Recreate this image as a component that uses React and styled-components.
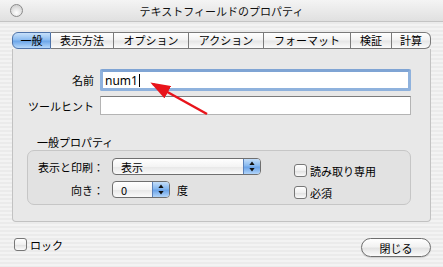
import styled, { createGlobalStyle } from "styled-components";

const GlobalStyle = createGlobalStyle`
  html, body {
    margin: 0;
    padding: 0;
  }
  body {
    font-family: "Noto Sans CJK JP", "Noto Sans", sans-serif;
    font-size: 11px;
    color: #000;
  }
`;

const tabs = [
  { label: "一般", width: 39 },
  { label: "表示方法", width: 63 },
  { label: "オプション", width: 75 },
  { label: "アクション", width: 75 },
  { label: "フォーマット", width: 87 },
  { label: "検証", width: 41 },
  { label: "計算", width: 39 },
];

// up/down arrows of a popup menu
const StepArrows = () => (
  <svg width="6" height="11" viewBox="0 0 6 11">
    <path d="M3,0.5 L5.6,4 L0.4,4 Z" fill="#111" />
    <path d="M3,10.5 L5.6,7 L0.4,7 Z" fill="#111" />
  </svg>
);

const App = () => {
  return (
    <Window>
      <GlobalStyle />
      <TitleBar>
        <CloseDot />
        <Title>テキストフィールドのプロパティ</Title>
        <Spacer />
      </TitleBar>

      <Main>
        <TabBar>
          {tabs.map((t, i) => (
            <Tab
              key={t.label}
              $width={t.width}
              $active={i === 0}
              $first={i === 0}
              $last={i === tabs.length - 1}
            >
              {t.label}
            </Tab>
          ))}
        </TabBar>

        <Panel>
          <FieldGrid>
            <FieldLabel>名前</FieldLabel>
            <TextBox $focused>
              num1
              <Caret />
            </TextBox>
            <FieldLabel>ツールヒント</FieldLabel>
            <TextBox />
          </FieldGrid>

          <GroupTitle>一般プロパティ</GroupTitle>
          <GroupBox>
            <PopupGrid>
              <PopupLabel>表示と印刷：</PopupLabel>
              <PopupRow>
                <Popup $width={149}>
                  <PopupText>表示</PopupText>
                  <Stepper>
                    <StepArrows />
                  </Stepper>
                </Popup>
              </PopupRow>
              <PopupLabel>向き：</PopupLabel>
              <PopupRow>
                <Popup $width={58}>
                  <PopupText>0</PopupText>
                  <Stepper>
                    <StepArrows />
                  </Stepper>
                </Popup>
                <Unit>度</Unit>
              </PopupRow>
            </PopupGrid>
            <CheckColumn>
              <CheckRow>
                <CheckBox />
                読み取り専用
              </CheckRow>
              <CheckRow>
                <CheckBox />
                必須
              </CheckRow>
            </CheckColumn>
          </GroupBox>
        </Panel>

        <Footer>
          <CheckRow>
            <CheckBox />
            ロック
          </CheckRow>
          <PillButton>閉じる</PillButton>
        </Footer>
      </Main>

      <Arrow width="443" height="267" viewBox="0 0 443 267">
        <defs>
          <marker
            id="head"
            markerWidth="20"
            markerHeight="14"
            refX="17"
            refY="7"
            orient="auto"
            markerUnits="userSpaceOnUse"
          >
            <path d="M0,0 L20,7 L0,14 Z" fill="#e8141b" />
          </marker>
        </defs>
        <line
          x1="207"
          y1="114"
          x2="153"
          y2="84"
          stroke="#e8141b"
          strokeWidth="2.5"
          markerEnd="url(#head)"
        />
      </Arrow>
    </Window>
  );
};

export default App;

const Window = styled.div`
  position: relative;
  width: 443px;
  height: 267px;
  overflow: hidden;
  display: flex;
  flex-direction: column;
  background: repeating-linear-gradient(
    to bottom,
    #f3f3f3 0px,
    #f3f3f3 2px,
    #ebebeb 2px,
    #ebebeb 4px
  );
`;

const TitleBar = styled.div`
  height: 22px;
  box-sizing: border-box;
  display: flex;
  align-items: center;
  padding: 0 10px;
  background: linear-gradient(to bottom, #f4f4f4, #e0e0e0);
  border-bottom: 1px solid #c4c4c4;
`;

const CloseDot = styled.div`
  width: 11px;
  height: 11px;
  border-radius: 50%;
  border: 1px solid #8a8a8a;
  background: radial-gradient(circle at 50% 70%, #ffffff, #d6d6d6 70%);
`;

const Title = styled.div`
  flex: 1;
  text-align: center;
  font-size: 11px;
  color: #111;
`;

const Spacer = styled.div`
  width: 13px;
`;

const Main = styled.div`
  flex: 1;
  display: flex;
  flex-direction: column;
  padding: 10px 12px 0 12px;
`;

const TabBar = styled.div`
  display: flex;
  height: 17px;
`;

const Tab = styled.div`
  width: ${(p) => p.$width}px;
  box-sizing: border-box;
  display: flex;
  align-items: center;
  justify-content: center;
  border: 1px solid #7a7a7a;
  border-left: ${(p) => (p.$first ? "1px solid #5a7fb0" : "none")};
  border-radius: ${(p) =>
    p.$first ? "6px 0 0 6px" : p.$last ? "0 6px 6px 0" : "0"};
  background: ${(p) =>
    p.$active
      ? "linear-gradient(to bottom, #c7e0fa 0%, #8cbcf0 45%, #6ea7e9 55%, #b6d8fb 100%)"
      : "linear-gradient(to bottom, #ffffff 0%, #f2f2f2 45%, #e6e6e6 55%, #fbfbfb 100%)"};
  border-color: ${(p) => (p.$active ? "#4d72a8" : "#7a7a7a")};
  font-size: 11px;
  line-height: 1;
`;

const Panel = styled.div`
  height: 173px;
  box-sizing: border-box;
  border: 1px solid #c2c2c2;
  border-top: none;
  border-radius: 0 0 4px 4px;
  background: #e8e8e8;
  padding: 20px 19px 0 0;
  display: flex;
  flex-direction: column;
`;

const FieldGrid = styled.div`
  display: grid;
  grid-template-columns: 81px 1fr;
  column-gap: 6px;
  row-gap: 5px;
  align-items: center;
`;

const FieldLabel = styled.div`
  text-align: right;
`;

const TextBox = styled.div`
  height: ${(p) => (p.$focused ? 22 : 19)}px;
  box-sizing: border-box;
  display: flex;
  align-items: center;
  padding-left: ${(p) => (p.$focused ? 2 : 3)}px;
  background: #fff;
  font-family: "Noto Sans", sans-serif;
  font-size: 12px;
  border: ${(p) => (p.$focused ? "3px solid #8fb2dd" : "1px solid #b4b4b4")};
  border-top-color: ${(p) => (p.$focused ? "#7fa4d4" : "#7c7c7c")};
  border-radius: ${(p) => (p.$focused ? "2px" : "0")};
`;

const Caret = styled.span`
  display: inline-block;
  width: 1px;
  height: 13px;
  margin-left: 1px;
  background: #000;
`;

const GroupTitle = styled.div`
  margin: 20px 0 0 24px;
  height: 15px;
  line-height: 15px;
`;

const GroupBox = styled.div`
  margin: 0 0 0 14px;
  height: 55px;
  box-sizing: border-box;
  border: 1px solid #c6c6c6;
  border-radius: 7px;
  background: #e2e2e2;
  display: flex;
  padding: 7px 0 0 0;
`;

const PopupGrid = styled.div`
  display: grid;
  grid-template-columns: 76px auto;
  column-gap: 8px;
  row-gap: 6px;
  align-items: center;
  align-content: start;
`;

const PopupLabel = styled.div`
  text-align: right;
`;

const PopupRow = styled.div`
  display: flex;
  align-items: center;
  gap: 7px;
`;

const Popup = styled.div`
  width: ${(p) => p.$width}px;
  height: 17px;
  box-sizing: border-box;
  display: flex;
  border: 1px solid #6f6f6f;
  border-radius: 4px;
  overflow: hidden;
  background: linear-gradient(to bottom, #ffffff 0%, #f4f4f4 50%, #e8e8e8 55%, #fafafa 100%);
`;

const PopupText = styled.div`
  flex: 1;
  display: flex;
  align-items: center;
  padding-left: 8px;
  font-size: 11px;
`;

const Stepper = styled.div`
  width: 16px;
  display: flex;
  align-items: center;
  justify-content: center;
  border-left: 1px solid #5a80b8;
  background: linear-gradient(to bottom, #c4def9 0%, #86b8ef 45%, #6aa3e8 55%, #b2d5fa 100%);
`;

const Unit = styled.span`
  font-size: 11px;
`;

const CheckColumn = styled.div`
  display: flex;
  flex-direction: column;
  gap: 9px;
  margin: 6px 0 0 33px;
`;

const CheckRow = styled.div`
  display: flex;
  align-items: center;
  gap: 3px;
  height: 13px;
  font-size: 11px;
`;

const CheckBox = styled.div`
  width: 13px;
  height: 13px;
  box-sizing: border-box;
  border: 1px solid #777;
  border-radius: 3px;
  background: linear-gradient(to bottom, #ffffff 0%, #f0f0f0 50%, #e2e2e2 55%, #fbfbfb 100%);
`;

const Footer = styled.div`
  display: flex;
  justify-content: space-between;
  align-items: flex-start;
  margin-top: 16px;
  padding-left: 2px;
`;

const PillButton = styled.div`
  width: 70px;
  height: 19px;
  box-sizing: border-box;
  display: flex;
  align-items: center;
  justify-content: center;
  border: 1px solid #6f6f6f;
  border-radius: 10px;
  background: linear-gradient(to bottom, #ffffff 0%, #f2f2f2 45%, #e3e3e3 55%, #fbfbfb 100%);
  box-shadow: 0 1px 1px rgba(0, 0, 0, 0.15);
  font-size: 11px;
`;

const Arrow = styled.svg`
  position: absolute;
  left: 0;
  top: 0;
  pointer-events: none;
`;
